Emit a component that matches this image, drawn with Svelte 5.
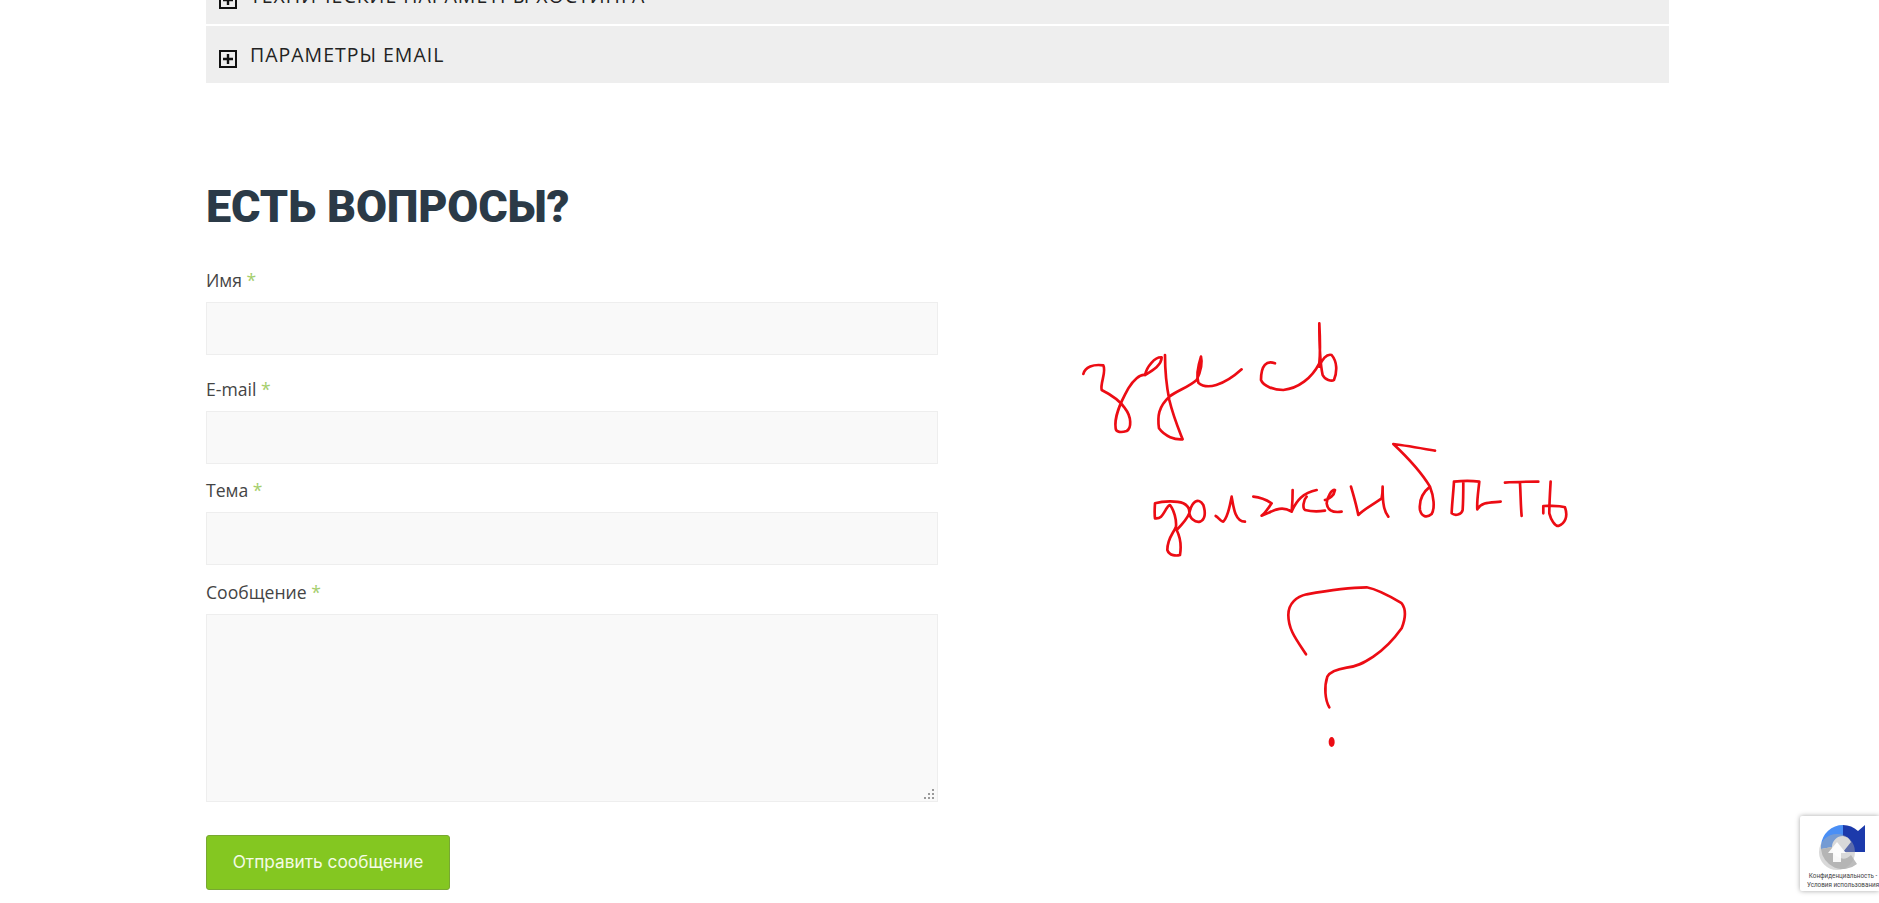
<script>
  let sections = ["ТЕХНИЧЕСКИЕ ПАРАМЕТРЫ ХОСТИНГА", "ПАРАМЕТРЫ EMAIL"];
  let fields = [
    { id: "name", label: "Имя" },
    { id: "email", label: "E-mail" },
    { id: "subject", label: "Тема" }
  ];
  // точки уголка textarea
  let grip = [[8, 0], [8, 4], [8, 8], [4, 4], [4, 8], [0, 8]];
</script>

<div class="page">
  <main class="content">
    <div class="accordion">
      {#each sections as title}
        <div class="bar">
          <svg class="plus" viewBox="0 0 18 18" aria-hidden="true">
            <rect x="1" y="1" width="16" height="16" fill="none" stroke="#111" stroke-width="2" />
            <path d="M9 4v10M4 9h10" stroke="#111" stroke-width="2.4" />
          </svg>
          <span>{title}</span>
        </div>
      {/each}
    </div>

    <h2>ЕСТЬ ВОПРОСЫ?</h2>

    <div class="columns">
      <form onsubmit={(e) => e.preventDefault()}>
        {#each fields as f}
          <div class="field">
            <label for={f.id}>{f.label} <em>*</em></label>
            <input id={f.id} type="text" />
          </div>
        {/each}
        <div class="field">
          <label for="message">Сообщение <em>*</em></label>
          <div class="area">
            <textarea id="message"></textarea>
            <svg class="grip" viewBox="0 0 10 10" aria-hidden="true">
              {#each grip as [x, y]}
                <rect {x} {y} width="2" height="2" fill="#9a9a9a" />
              {/each}
            </svg>
          </div>
        </div>
        <button type="submit">Отправить сообщение</button>
      </form>

      <!-- рукописная пометка поверх пустой колонки -->
      <svg class="scribble" viewBox="1050 300 550 480" aria-hidden="true">
        <g transform="translate(1050 300) scale(.3333)">
          <path d="M100 222C105 200 130 192 160 196C170 215 150 250 155 270C175 280 205 295 225 325C245 350 245 385 230 393C215 398 197 398 197 385C192 350 210 310 235 265C250 240 270 222 285 225C290 200 315 170 335 172C335 195 310 210 285 225" />
          <path d="M345 165C345 210 350 260 358 300C370 350 385 385 398 418C375 420 345 410 327 385C322 350 325 320 358 290C385 270 415 262 440 240C452 215 458 190 453 170C445 195 438 225 445 248C470 270 520 258 575 208" />
          <path d="M675 190C650 180 633 195 633 240C640 258 670 270 700 270C745 265 785 235 808 190C812 150 810 110 808 70C808 130 808 180 818 225C825 240 845 245 852 240C862 215 862 185 845 165C830 160 815 180 808 200" />
          <path d="M315 655C313 640 314 625 315 610C340 603 380 602 400 610C410 615 418 625 418 635M315 655C335 658 340 640 350 625C353 620 357 615 360 615C372 630 380 660 378 680C370 700 352 715 352 750C358 768 380 768 390 765C395 735 390 710 380 690C395 675 410 660 418 640C425 605 445 590 460 615C468 640 465 660 450 665C435 668 418 655 418 635" />
          <path d="M497 648C505 652 512 665 520 665C535 650 540 615 545 590C550 620 555 665 585 665" />
          <path d="M610 590C630 592 650 600 665 610C655 625 645 640 635 647C660 640 690 612 725 635C727 615 728 590 728 570M725 635C740 600 760 578 800 570M770 590C760 600 757 625 765 630C785 635 805 635 825 632M825 600C838 595 852 590 855 570C845 568 832 590 830 610C832 628 845 640 875 635" />
          <path d="M903 560C912 590 920 620 925 645C945 625 975 610 995 595C998 580 998 570 998 560C998 590 998 630 1015 650" />
        </g>
        <g transform="translate(1250 430) scale(.3333)">
          <path d="M555 62C515 55 470 47 430 42C465 75 510 120 540 170C552 200 555 235 545 252C530 265 515 260 510 240C507 215 515 190 540 170" />
          <path d="M612 155C640 152 665 152 688 155C685 185 680 215 682 238C695 215 720 218 752 215M612 155C610 190 606 220 605 250C615 258 635 255 638 240C640 210 640 180 640 155" />
          <path d="M765 158C800 155 835 155 865 155M810 158C812 190 812 225 815 258" />
          <path d="M902 155C900 190 898 220 898 250C903 270 915 288 925 288C945 280 955 260 945 232C925 225 900 228 880 228V250" />
          <path d="M168 673C140 630 115 600 115 555C115 520 140 500 170 493C230 482 300 472 350 472C390 480 430 505 455 520C470 540 465 570 455 595C430 630 400 660 370 680C340 700 320 710 290 713C260 718 240 725 232 740C222 770 225 810 238 832" />
          <ellipse class="dot" cx="245" cy="936" rx="9" ry="15" />
        </g>
      </svg>
    </div>
  </main>

  <div class="recaptcha">
    <svg class="logo" viewBox="0 0 44 44" aria-hidden="true">
      <path d="M22 0V11A11 11 0 0 0 11 22L0 24V20A22 22 0 0 1 22 0Z" fill="#4a8ff5" />
      <path d="M22 0A22 22 0 0 1 37 6L44 0V27H22L30 17A10 10 0 0 0 22 11Z" fill="#1c3aab" />
      <path d="M0 24L11 22A11 11 0 0 0 30 30L36 39A22 22 0 0 1 0 24Z" fill="#bdbdbd" />
    </svg>
    <span class="badge-text">Конфиденциальность -<br />Условия использования</span>
  </div>

  <div class="to-top">
    <svg viewBox="0 0 36 36" aria-hidden="true">
      <path d="M18 8L27 19H22V28H14V19H9Z" fill="#fff" opacity=".9" />
    </svg>
  </div>
</div>

<style>
  :global(body) {
    overflow: hidden;
    background: #fff;
  }

  .page {
    height: 903px;
    overflow: hidden;
    font-family: "Open Sans", sans-serif;
    color: #444;
  }

  .content {
    width: 1463px;
    margin: -33px 0 0 206px;
  }

  .accordion {
    display: flex;
    flex-direction: column;
    gap: 2px;
  }

  .bar {
    display: flex;
    align-items: flex-start;
    gap: 13px;
    height: 57px;
    padding: 0 13px;
    box-sizing: border-box;
    background: #eee;
    color: #222;
    font-size: 19.5px;
    line-height: 57px;
    letter-spacing: 1px;
  }

  .plus {
    width: 18px;
    height: 18px;
    margin-top: 24px;
    flex: none;
  }

  h2 {
    margin: 97px 0 35px;
    font-family: Roboto, sans-serif;
    font-size: 45px;
    font-weight: 900;
    line-height: 54px;
    letter-spacing: -0.2px;
    color: #2b3a47;
  }

  .columns {
    display: grid;
    grid-template-columns: 732px 550px;
    column-gap: 112px;
  }

  .field {
    display: flex;
    flex-direction: column;
    margin-bottom: 17px;
  }

  .field:nth-child(1) {
    margin-bottom: 23px;
  }

  .field:nth-child(2) {
    margin-bottom: 15px;
  }

  .field:nth-child(3) {
    margin-bottom: 16px;
  }

  label {
    font-size: 17.6px;
    line-height: 22px;
    margin-bottom: 11px;
  }

  em {
    font-style: normal;
    color: #a4ce6c;
  }

  input,
  textarea {
    display: block;
    box-sizing: border-box;
    width: 100%;
    margin: 0;
    background: #f9f9f9;
    border: 1px solid #eee;
    border-radius: 0;
    outline: none;
  }

  input {
    height: 53px;
  }

  textarea {
    height: 188px;
    resize: none;
  }

  .area {
    position: relative;
  }

  .grip {
    position: absolute;
    right: 4px;
    bottom: 3px;
    width: 10px;
    height: 10px;
  }

  button {
    display: block;
    width: 244px;
    height: 55px;
    margin-top: 33px;
    padding: 0 0 2px;
    background: #84c721;
    border: 1px solid #78a832;
    border-radius: 3px;
    color: #f4fbe6;
    font-family: Inter, sans-serif;
    font-size: 17.3px;
  }

  .scribble {
    display: block;
    width: 550px;
    height: 480px;
    margin-top: 31px;
  }

  .scribble path {
    fill: none;
    stroke: #ec0c14;
    stroke-width: 8;
    stroke-linecap: round;
    stroke-linejoin: round;
  }

  .dot {
    fill: #ec0c14;
  }

  .recaptcha {
    position: absolute;
    top: 816px;
    left: 1800px;
    width: 79px;
    height: 75px;
    overflow: hidden;
    background: #fff;
    box-shadow: 0 0 5px rgba(0, 0, 0, 0.35);
    border-radius: 2px 0 0 2px;
  }

  .logo {
    position: absolute;
    left: 21px;
    top: 9px;
    width: 44px;
    height: 44px;
  }

  .badge-text {
    position: absolute;
    left: 0;
    top: 56px;
    width: 86px;
    text-align: center;
    font-family: Roboto, sans-serif;
    font-size: 6.3px;
    line-height: 9px;
    white-space: nowrap;
    color: #444;
  }

  .to-top {
    position: absolute;
    left: 1819px;
    top: 834px;
    width: 36px;
    height: 36px;
    border-radius: 50%;
    background: rgba(170, 170, 170, 0.45);
  }
</style>
